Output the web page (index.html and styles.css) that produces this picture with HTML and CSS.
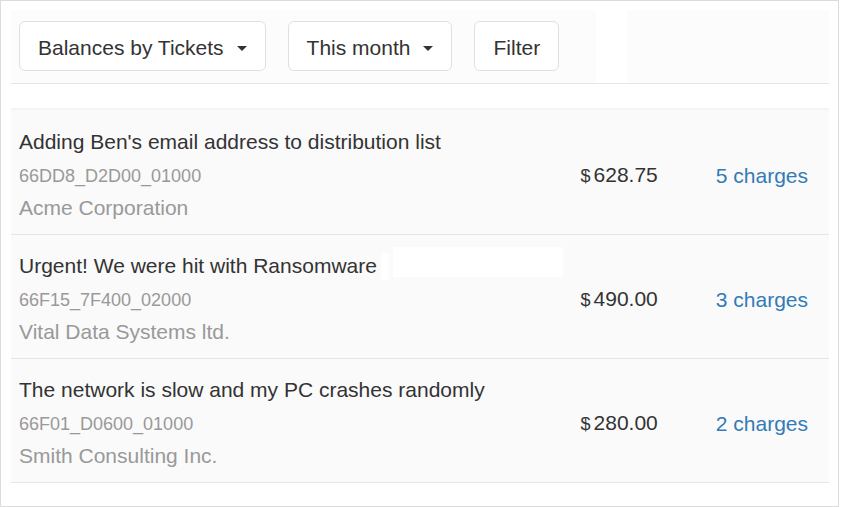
FILE: index.html
```html
<!DOCTYPE html>
<html lang="en">
<head>
<meta charset="utf-8">
<title>Balances by Tickets</title>
<link rel="stylesheet" href="styles.css">
</head>
<body>
<div class="frame">
  <div class="toolbar">
    <button class="btn">Balances by Tickets<span class="caret"></span></button>
    <button class="btn">This month<span class="caret"></span></button>
    <button class="btn">Filter</button>
  </div>
  <div class="list">
    <div class="row">
      <div class="info">
        <div class="title">Adding Ben's email address to distribution list</div>
        <div class="code">66DD8_D2D00_01000</div>
        <div class="company">Acme Corporation</div>
      </div>
      <div class="price"><span class="cur">$</span>628.75</div>
      <a class="charges" href="#">5 charges</a>
    </div>
    <div class="row">
      <div class="info">
        <div class="title">Urgent! We were hit with Ransomware<span class="blank-sm"></span><span class="blank-lg"></span></div>
        <div class="code">66F15_7F400_02000</div>
        <div class="company">Vital Data Systems ltd.</div>
      </div>
      <div class="price"><span class="cur">$</span>490.00</div>
      <a class="charges" href="#">3 charges</a>
    </div>
    <div class="row">
      <div class="info">
        <div class="title">The network is slow and my PC crashes randomly</div>
        <div class="code">66F01_D0600_01000</div>
        <div class="company">Smith Consulting Inc.</div>
      </div>
      <div class="price"><span class="cur">$</span>280.00</div>
      <a class="charges" href="#">2 charges</a>
    </div>
  </div>
</div>
</body>
</html>
```

FILE: styles.css
```css
* { box-sizing: border-box; }

html, body {
  margin: 0;
  padding: 0;
  background: #fff;
}

body {
  font-family: "Liberation Sans", Arial, sans-serif;
  font-size: 21px;
  color: #333;
}

.frame {
  width: 839px;
  height: 507px;
  border: 1px solid #dcdcdc;
  padding: 9px 9px 0 10px;
  overflow: hidden;
}

.toolbar {
  display: flex;
  gap: 22px;
  padding: 11px 8px 12px;
  border-bottom: 1px solid #e6e6e6;
  background: linear-gradient(to right, #fcfcfc 585px, #fff 585px, #fff 616px, #fcfcfc 616px);
}

.btn {
  display: inline-flex;
  align-items: center;
  height: 50px;
  padding: 3px 18px 0;
  font-family: inherit;
  font-size: 21px;
  line-height: 30px;
  color: #333;
  background: #fff;
  border: 1px solid #e0e0e0;
  border-radius: 6px;
}

.caret {
  display: inline-block;
  width: 0;
  height: 0;
  margin-left: 13px;
  margin-top: 2px;
  border-left: 5.5px solid transparent;
  border-right: 5.5px solid transparent;
  border-top: 5.5px solid #333;
}

.list {
  margin-top: 24px;
  background: #fafafa;
  border-top: 2px solid #f4f4f4;
  padding-top: 1px;
}

.row {
  display: flex;
  align-items: center;
  padding: 14px 21px 10px 8px;
  border-bottom: 1px solid #e6e6e6;
}

.info {
  flex: 1;
  min-width: 0;
  line-height: 33px;
}

.title {
  color: #333;
  white-space: nowrap;
}

.code {
  font-size: 18px;
  line-height: 29px;
  padding-top: 4px;
  color: #999;
}

.company {
  color: #999;
}

.blank-sm {
  display: inline-block;
  width: 8px;
  height: 27px;
  margin-left: 4px;
  vertical-align: -7px;
  background: #fff;
}

.blank-lg {
  display: inline-block;
  width: 170px;
  height: 30px;
  margin-left: 4px;
  margin-top: -3px;
  vertical-align: -4px;
  background: #fff;
}

.price {
  width: 120px;
  padding-top: 2px;
  text-align: right;
  color: #333;
  line-height: 33px;
}

.cur {
  font-size: 18px;
  margin-right: 3px;
}

.charges {
  margin-left: 58px;
  padding-top: 2px;
  color: #337ab7;
  text-decoration: none;
  line-height: 33px;
}
```
